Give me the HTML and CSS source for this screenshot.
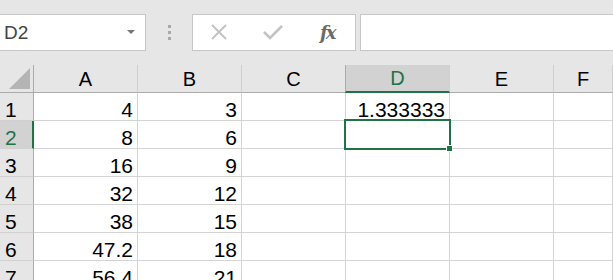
FILE: index.html
```html
<!DOCTYPE html>
<html lang="en">
<head>
  <meta charset="UTF-8">
  <title>Book1 - Excel</title>
  <link rel="stylesheet" href="styles.css">
</head>
<body>
  <div class="formula-bar">
    <div class="name-box">
      <span class="name-text">D2</span>
      <span class="name-arrow"></span>
    </div>
    <div class="grip"><span></span><span></span><span></span></div>
    <div class="fx-buttons">
      <svg class="icon" width="18" height="16" viewBox="0 0 18 16">
        <path d="M2 1 L16 15 M16 1 L2 15" stroke="#c3c3c3" stroke-width="2" fill="none"/>
      </svg>
      <svg class="icon" width="20" height="16" viewBox="0 0 20 16">
        <path d="M1 8 L7 14 L19 2" stroke="#c3c3c3" stroke-width="2.6" fill="none"/>
      </svg>
      <span class="fx">fx</span>
    </div>
    <div class="formula-input"></div>
  </div>

  <div class="sheet">
    <div class="corner"><span class="tri"></span></div>
    <div class="col-head">A</div>
    <div class="col-head">B</div>
    <div class="col-head">C</div>
    <div class="col-head active">D</div>
    <div class="col-head">E</div>
    <div class="col-head">F</div>

    <div class="row-head">1</div>
    <div class="cell num">4</div><div class="cell num">3</div><div class="cell"></div><div class="cell num">1.333333</div><div class="cell"></div><div class="cell"></div>

    <div class="row-head active">2</div>
    <div class="cell num">8</div><div class="cell num">6</div><div class="cell"></div><div class="cell selected"><span class="handle"></span></div><div class="cell"></div><div class="cell"></div>

    <div class="row-head">3</div>
    <div class="cell num">16</div><div class="cell num">9</div><div class="cell"></div><div class="cell"></div><div class="cell"></div><div class="cell"></div>

    <div class="row-head">4</div>
    <div class="cell num">32</div><div class="cell num">12</div><div class="cell"></div><div class="cell"></div><div class="cell"></div><div class="cell"></div>

    <div class="row-head">5</div>
    <div class="cell num">38</div><div class="cell num">15</div><div class="cell"></div><div class="cell"></div><div class="cell"></div><div class="cell"></div>

    <div class="row-head">6</div>
    <div class="cell num">47.2</div><div class="cell num">18</div><div class="cell"></div><div class="cell"></div><div class="cell"></div><div class="cell"></div>

    <div class="row-head">7</div>
    <div class="cell num">56.4</div><div class="cell num">21</div><div class="cell"></div><div class="cell"></div><div class="cell"></div><div class="cell"></div>
  </div>
</body>
</html>
```

FILE: styles.css
```css
* {
  box-sizing: border-box;
}
body {
  margin: 0;
  background: #ffffff;
  font-family: "Liberation Sans", Arial, sans-serif;
  color: #000;
  overflow: hidden;
  height: 280px;
}

/* formula bar */
.formula-bar {
  display: flex;
  align-items: center;
  height: 65px;
  background: #e6e6e6;
  padding-bottom: 1px;
}
.name-box {
  display: flex;
  align-items: center;
  justify-content: space-between;
  width: 147px;
  height: 37px;
  margin-left: -1px;
  background: #fff;
  border: 1px solid #c6c6c6;
  padding: 0 10px 0 4px;
}
.name-text {
  font-size: 19px;
  color: #444;
  padding-top: 1px;
}
.name-arrow {
  width: 0;
  height: 0;
  border-left: 4px solid transparent;
  border-right: 4px solid transparent;
  border-top: 4px solid #777;
}
.grip {
  width: 46px;
  display: flex;
  flex-direction: column;
  align-items: center;
  gap: 3px;
}
.grip span {
  width: 3px;
  height: 3px;
  background: #a8a8a8;
}
.fx-buttons {
  display: flex;
  align-items: center;
  width: 164px;
  height: 37px;
  background: #fff;
  border: 1px solid #c6c6c6;
  padding-left: 17px;
  gap: 35px;
}
.fx {
  font-family: "DejaVu Serif", "Liberation Serif", serif;
  font-style: italic;
  font-weight: bold;
  font-size: 18px;
  color: #6a6a6a;
  margin-left: 2px;
  letter-spacing: -2px;
}
.formula-input {
  flex: 1;
  height: 37px;
  margin-left: 4px;
  background: #fff;
  border: 1px solid #c6c6c6;
  border-right: none;
}

/* grid */
.sheet {
  display: grid;
  grid-template-columns: 34px 104px 104px 104px 104px 104px 1fr;
  grid-auto-rows: 28px;
}
.corner {
  background: #e6e6e6;
  border-right: 1px solid #ababab;
  border-bottom: 1px solid #ababab;
  display: flex;
  align-items: flex-end;
  justify-content: flex-end;
  padding: 0 3px 3px 0;
}
.tri {
  width: 0;
  height: 0;
  border-left: 21px solid transparent;
  border-bottom: 21px solid #b4b4b4;
}
.col-head {
  background: #e6e6e6;
  border-bottom: 1px solid #ababab;
  border-right: 1px solid #d0d0d0;
  display: flex;
  align-items: center;
  justify-content: center;
  font-size: 20px;
  padding-top: 1px;
  color: #000;
}
.col-head.active {
  background: #d2d2d2;
  color: #217346;
  border-bottom: 2px solid #217346;
  border-left: 1px solid #ababab;
  margin-left: -1px;
}
.row-head {
  background: #e6e6e6;
  border-right: 1px solid #ababab;
  border-bottom: 1px solid #d0d0d0;
  display: flex;
  align-items: flex-end;
  padding-left: 5px;
  font-size: 21px;
  line-height: 21px;
}
.row-head.active {
  background: #d2d2d2;
  color: #217346;
  border-right: 2px solid #217346;
}
.cell {
  border-right: 1px solid #d4d4d4;
  border-bottom: 1px solid #d4d4d4;
  font-size: 21px;
  line-height: 21px;
  display: flex;
  align-items: flex-end;
  justify-content: flex-end;
  padding: 0 4px 0 0;
  color: #000;
}
.cell.selected {
  position: relative;
}
.cell.selected::after {
  content: "";
  position: absolute;
  top: -2px;
  left: -2px;
  right: -2px;
  bottom: -2px;
  border: 2px solid #217346;
}
.handle {
  position: absolute;
  right: -4px;
  bottom: -4px;
  width: 7px;
  height: 7px;
  background: #217346;
  border: 1px solid #fff;
  z-index: 1;
}
```
